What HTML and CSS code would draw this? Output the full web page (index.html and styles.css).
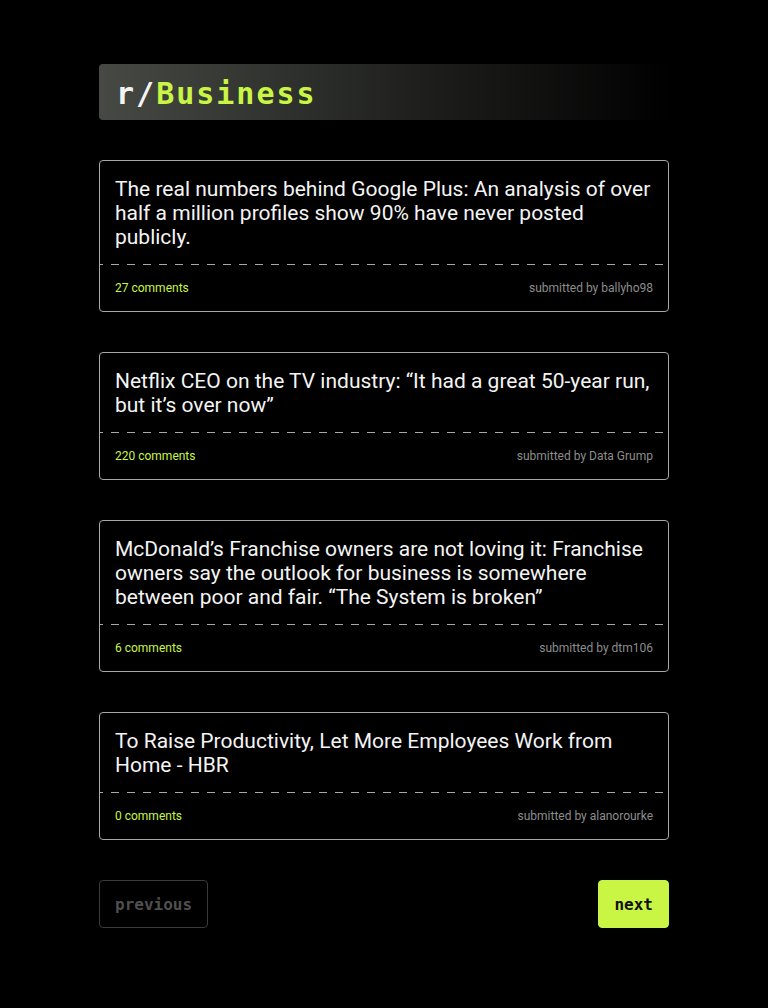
FILE: index.html
```html
<!DOCTYPE html>
<html lang="en">
<head>
<meta charset="utf-8">
<title>r/Business</title>
<link rel="stylesheet" href="styles.css">
</head>
<body>
<main class="page">
  <header class="sub-header">
    <h1 class="sub-title"><span class="prefix">r/</span><span class="name">Business</span></h1>
  </header>
  <ul class="posts">
    <li class="post">
      <h2 class="post-title">The real numbers behind Google Plus: An analysis of over half a million profiles show 90% have never posted publicly.</h2>
      <div class="post-meta"><span class="comments">27 comments</span><span class="author">submitted by ballyho98</span></div>
    </li>
    <li class="post">
      <h2 class="post-title">Netflix CEO on the TV industry: “It had a great 50-year run, but it’s over now”</h2>
      <div class="post-meta"><span class="comments">220 comments</span><span class="author">submitted by Data Grump</span></div>
    </li>
    <li class="post">
      <h2 class="post-title">McDonald’s Franchise owners are not loving it: Franchise owners say the outlook for business is somewhere between poor and fair. “The System is broken”</h2>
      <div class="post-meta"><span class="comments">6 comments</span><span class="author">submitted by dtm106</span></div>
    </li>
    <li class="post">
      <h2 class="post-title">To Raise Productivity, Let More Employees Work from Home - HBR</h2>
      <div class="post-meta"><span class="comments">0 comments</span><span class="author">submitted by alanorourke</span></div>
    </li>
  </ul>
  <nav class="pager">
    <button class="btn btn-prev" disabled>previous</button>
    <button class="btn btn-next">next</button>
  </nav>
</main>
</body>
</html>
```
FILE: styles.css
```css
html, body {
  margin: 0;
  padding: 0;
  background: #000;
}
body {
  font-family: Roboto, "Liberation Sans", sans-serif;
  color: #f2f2f2;
}
.page {
  width: 570px;
  margin: 0 auto;
  padding: 64px 0 40px;
  box-sizing: border-box;
}
.sub-header {
  height: 56px;
  border-radius: 4px;
  background: linear-gradient(90deg, #464944 0%, #1c1d1b 60%, #000 100%);
  display: flex;
  align-items: center;
  padding: 4px 16px 0 17px;
  box-sizing: border-box;
}
.sub-title {
  margin: 0;
  font-family: "DejaVu Sans Mono", "Liberation Mono", monospace;
  font-weight: bold;
  font-size: 30px;
  line-height: 36px;
  letter-spacing: 2px;
}
.prefix { color: #f4f4f4; }
.name { color: #c9f545; }
.posts {
  list-style: none;
  margin: 40px 0 0;
  padding: 0;
  display: flex;
  flex-direction: column;
  gap: 40px;
}
.post {
  border: 1px solid #a8a8a8;
  border-radius: 4px;
}
.post-title {
  margin: 0;
  padding: 16px 15px 16px;
  font-size: 21px;
  line-height: 24px;
  font-weight: 400;
  color: #f4f4f4;
  background-image: linear-gradient(90deg, #a8a8a8 50%, transparent 50%);
  background-size: 16px 1px;
  background-position: 11px 100%;
  background-repeat: repeat-x;
}
.post-meta {
  display: flex;
  justify-content: space-between;
  align-items: center;
  padding: 16px 15px 16px;
  font-size: 12px;
  line-height: 14px;
}
.comments { color: #c9f545; }
.author { color: #8d8d8d; }
.pager {
  display: flex;
  justify-content: space-between;
  margin-top: 40px;
}
.btn {
  height: 48px;
  padding: 0 15px;
  border-radius: 4px;
  font-family: "DejaVu Sans Mono", "Liberation Mono", monospace;
  font-weight: bold;
  font-size: 16px;
}
.btn-prev {
  background: #000;
  border: 1px solid #3a3a3a;
  color: #4f4f4f;
}
.btn-next {
  background: #c9f545;
  border: 1px solid #c9f545;
  color: #111;
}
```
